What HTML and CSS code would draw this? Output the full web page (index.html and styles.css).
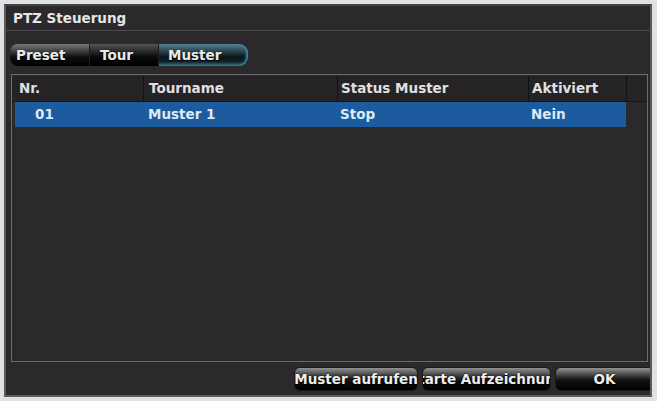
FILE: index.html
```html
<!DOCTYPE html>
<html lang="de">
<head>
<meta charset="utf-8">
<title>PTZ Steuerung</title>
<link rel="stylesheet" href="styles.css">
</head>
<body>
<div class="panel">
  <div class="title">PTZ Steuerung</div>
  <div class="tabs">
    <div class="tab tab-first">Preset</div>
    <div class="tab tab-mid">Tour</div>
    <div class="tab tab-active">Muster</div>
  </div>
  <div class="table">
    <div class="thead">
      <div class="th th-nr">Nr.</div>
      <div class="th">Tourname</div>
      <div class="th th-status">Status Muster</div>
      <div class="th th-akt">Aktiviert</div>
      <div class="th th-end"></div>
    </div>
    <div class="trow selected">
      <div class="td td-nr">01</div>
      <div class="td">Muster 1</div>
      <div class="td td-status">Stop</div>
      <div class="td td-akt">Nein</div>
    </div>
  </div>
  <div class="actions">
    <div class="btn btn-call"><span>Muster aufrufen</span></div>
    <div class="btn btn-rec"><span>Starte Aufzeichnung</span></div>
    <div class="btn btn-ok"><span>OK</span></div>
  </div>
</div>
</body>
</html>
```
FILE: styles.css
```css
html, body {
  margin: 0;
  padding: 0;
}
body {
  width: 657px;
  height: 401px;
  background: #dfe2e2;
  padding: 4px 5px 4px 4px;
  box-sizing: border-box;
  font-family: "DejaVu Sans", "Liberation Sans", sans-serif;
  font-weight: bold;
  font-size: 13.5px;
  color: #e2e2e2;
  overflow: hidden;
}
.panel {
  width: 648px;
  height: 393px;
  box-sizing: border-box;
  background: #2b292b;
  border: 2px solid #5b5b5b;
  border-top-color: #444;
  display: flex;
  flex-direction: column;
  overflow: hidden;
}
.title {
  height: 24px;
  line-height: 24px;
  padding-left: 7px;
  border-bottom: 1px solid #4c4a4c;
  color: #e6e6e6;
  flex: none;
}
.tabs {
  display: flex;
  margin: 13px 0 0 4px;
  height: 22px;
  flex: none;
}
.tab {
  height: 22px;
  line-height: 22px;
  box-sizing: border-box;
  color: #eaeaea;
  text-shadow: 0 1px 1px #000;
  background: linear-gradient(#7a7a7a 0%, #444 30%, #0e0e0e 60%, #000 100%);
  border-right: 1px solid #1d1d1d;
}
.tab-first {
  width: 80px;
  padding-left: 6px;
  border-radius: 8px 0 0 8px;
}
.tab-mid {
  width: 69px;
  padding-left: 10px;
  background: linear-gradient(#555 0%, #2e2e2e 30%, #090909 60%, #000 100%);
}
.tab-active {
  width: 89px;
  padding-left: 9px;
  border-right: none;
  border-radius: 0 9px 9px 0;
  background: linear-gradient(#5a7f8d 0%, #27404a 35%, #0b1519 60%, #0f2229 80%, #2f7b8e 100%);
  box-shadow: inset -2px 0 2px #3f8ba0;
}
.table {
  margin: 8px 2px 0 5px;
  height: 288px;
  border: 1px solid #6c6c6c;
  box-sizing: border-box;
  flex: none;
}
.thead {
  display: grid;
  grid-template-columns: 131px 194px 191px 98px 1fr;
  height: 26px;
  margin-top: 1px;
  background: #252325;
  border-bottom: 1px solid #181718;
  box-sizing: border-box;
}
.th {
  line-height: 25px;
  padding-left: 5px;
  border-left: 1px solid #121112;
  color: #e0e0e0;
  white-space: nowrap;
}
.th-nr {
  padding-left: 7px;
  border-left: none;
}
.th-status {
  padding-left: 3px;
}
.th-akt {
  padding-left: 3px;
}
.trow {
  display: grid;
  grid-template-columns: 128px 194px 191px 98px;
  width: 611px;
  margin-left: 3px;
  height: 25px;
}
.selected {
  background: #1c5c9e;
}
.td {
  line-height: 25px;
  padding-left: 5px;
  color: #dce9f6;
}
.td-nr {
  padding-left: 20px;
}
.td-status {
  padding-left: 3px;
}
.td-akt {
  padding-left: 3px;
}
.actions {
  display: flex;
  justify-content: flex-end;
  gap: 4px;
  margin-top: 5px;
  margin-right: -4px;
  height: 24px;
  flex: none;
}
.btn {
  height: 24px;
  box-sizing: border-box;
  border-radius: 6px;
  border: 1px solid #1a1a1a;
  background: linear-gradient(#939393 0%, #4a4a4a 30%, #121212 55%, #000 100%);
  display: flex;
  justify-content: center;
  align-items: center;
  overflow: hidden;
  white-space: nowrap;
  color: #eeeeee;
  text-shadow: 0 0 2px #000, 0 1px 1px #000;
}
.btn span {
  flex: none;
}
.btn-call {
  width: 124px;
}
.btn-rec {
  width: 129px;
}
.btn-ok {
  width: 99px;
}
```
